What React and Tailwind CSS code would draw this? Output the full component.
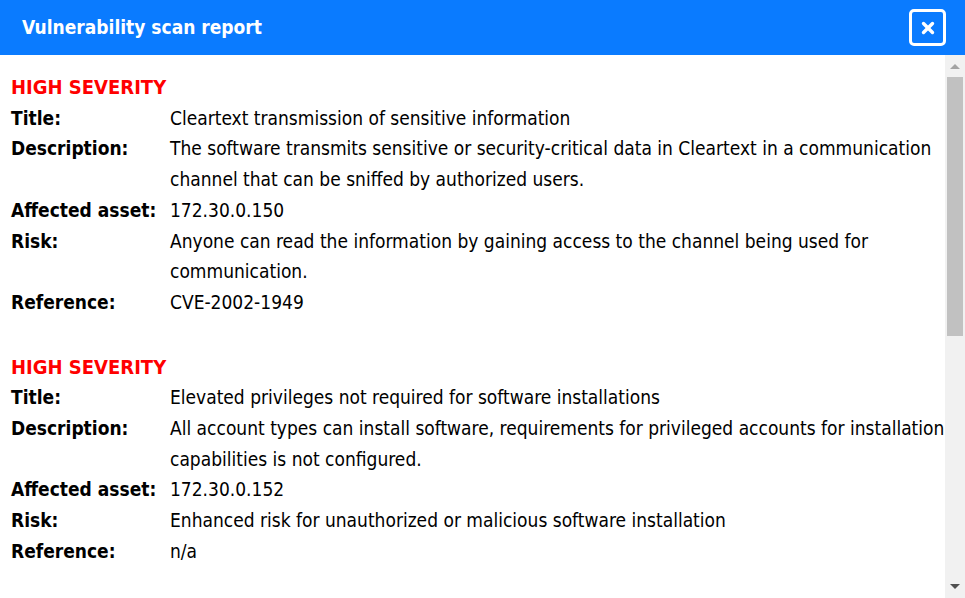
import { X } from 'lucide-react'

const findings = [
  {
    severity: 'HIGH SEVERITY',
    title: ['Cleartext transmission of sensitive information'],
    description: [
      'The software transmits sensitive or security-critical data in Cleartext in a communication',
      'channel that can be sniffed by authorized users.',
    ],
    asset: ['172.30.0.150'],
    risk: ['Anyone can read the information by gaining access to the channel being used for', 'communication.'],
    reference: ['CVE-2002-1949'],
  },
  {
    severity: 'HIGH SEVERITY',
    title: ['Elevated privileges not required for software installations'],
    description: [
      'All account types can install software, requirements for privileged accounts for installation',
      'capabilities is not configured.',
    ],
    asset: ['172.30.0.152'],
    risk: ['Enhanced risk for unauthorized or malicious software installation'],
    reference: ['n/a'],
  },
]

function Row({ label, lines }) {
  return (
    <div className="flex">
      <div className="w-[159px] shrink-0 font-bold">{label}</div>
      <div className="whitespace-nowrap">
        {lines.map((line, i) => (
          <div key={i}>{line}</div>
        ))}
      </div>
    </div>
  )
}

function Scrollbar() {
  return (
    <div className="w-[20px] shrink-0 bg-[#f1f1f1] flex flex-col">
      <div className="h-[22px] flex items-center justify-center">
        <svg width="10" height="6" viewBox="0 0 10 6">
          <path d="M0 6 L5 1 L10 6 Z" fill="#a3a3a3" />
        </svg>
      </div>
      <div className="h-[259px] mx-[2px] bg-[#c1c1c1]" />
      <div className="flex-1" />
      <div className="h-[22px] flex items-center justify-center">
        <svg width="10" height="6" viewBox="0 0 10 6">
          <path d="M0 0 L10 0 L5 5 Z" fill="#505050" />
        </svg>
      </div>
    </div>
  )
}

export default function App() {
  return (
    <div
      className="w-[965px] h-[598px] flex flex-col bg-white overflow-hidden"
      style={{ fontFamily: '"DejaVu Sans Condensed", "DejaVu Sans", sans-serif' }}
    >
      <div className="h-[55px] shrink-0 bg-[#0a7bff] flex items-center justify-between pl-[22px] pr-[19px]">
        <h1 className="text-white font-bold text-[19px]">Vulnerability scan report</h1>
        <button className="w-[37px] h-[37px] border-[3px] border-white rounded-[5px] flex items-center justify-center">
          <X size={18} strokeWidth={4.5} color="white" />
        </button>
      </div>

      <div className="flex-1 flex min-h-0">
        <div className="flex-1 overflow-hidden pl-[11px] pt-[17px] text-[19px] text-black leading-[30.7px]">
          {findings.map((f, i) => (
            <div key={i} className={i > 0 ? 'mt-[34px]' : ''}>
              <div className="font-bold text-[20px] text-[#ff0000]">{f.severity}</div>
              <Row label="Title:" lines={f.title} />
              <Row label="Description:" lines={f.description} />
              <Row label="Affected asset:" lines={f.asset} />
              <Row label="Risk:" lines={f.risk} />
              <Row label="Reference:" lines={f.reference} />
            </div>
          ))}
        </div>
        <Scrollbar />
      </div>
    </div>
  )
}
